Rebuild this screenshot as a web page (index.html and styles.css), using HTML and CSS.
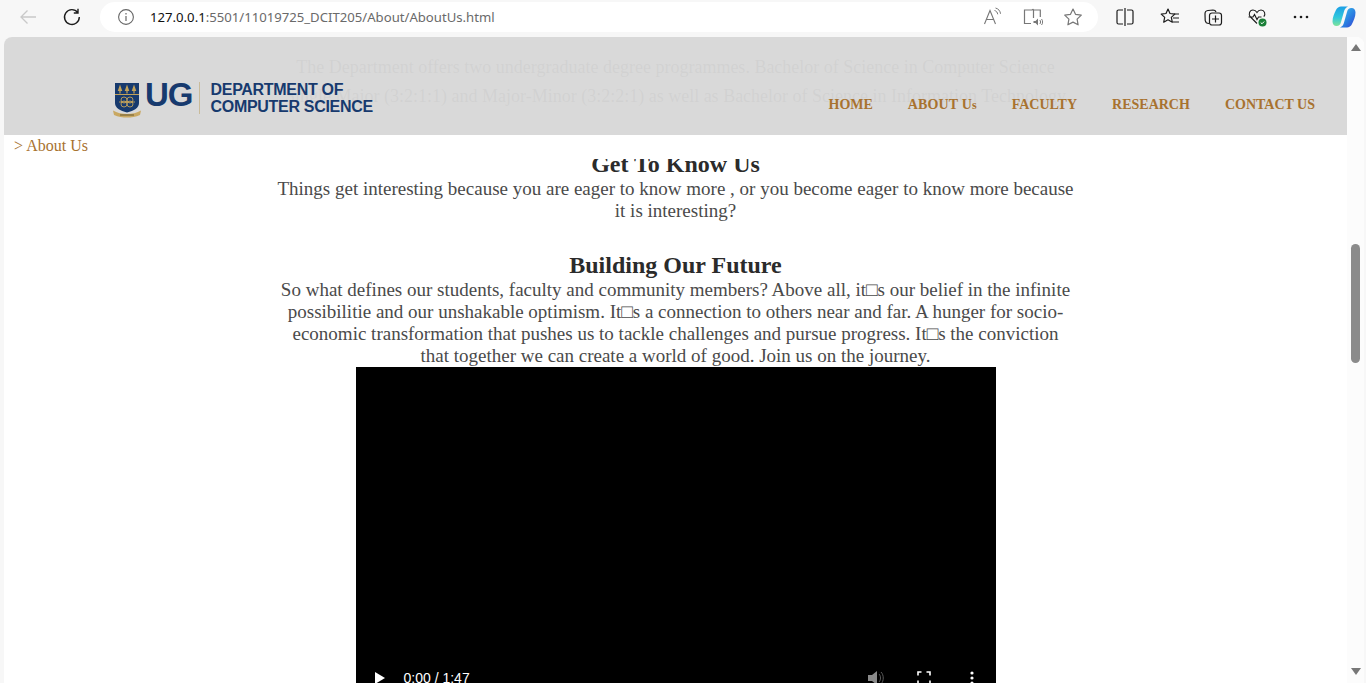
FILE: index.html
```html
<!DOCTYPE html>
<html lang="en">
<head>
<meta charset="utf-8">
<title>About Us</title>
<link rel="stylesheet" href="styles.css">
</head>
<body>
<div class="toolbar">
  <svg class="tb-icon back" width="20" height="20" viewBox="0 0 20 20"><path d="M18 10H3M9.500 3.500 3 10l6.500 6.500" fill="none" stroke="#c9c9c9" stroke-width="1.300"/></svg>
  <svg class="tb-icon reload" width="20" height="20" viewBox="0 0 20 20"><path d="M15.800 5.600A7.400 7.400 0 1 0 17.300 10M16 1.800v4.200h-4.200" fill="none" stroke="#1c1c1c" stroke-width="1.400"/></svg>
  <div class="address">
    <svg width="18" height="18" viewBox="0 0 18 18"><circle cx="9" cy="9" r="7.400" fill="none" stroke="#666" stroke-width="1.100"/><path d="M9 8v5M9 5v1.400" stroke="#666" stroke-width="1.200"/></svg>
    <span class="url"><b>127.0.0.1</b>:5501/11019725_DCIT205/About/AboutUs.html</span>
    <span class="addr-icons">
      <svg width="20" height="20" viewBox="0 0 20 20"><path d="M1.500 17 7 3.500 12.500 17M3.500 12.500h7" fill="none" stroke="#777" stroke-width="1.100"/><path d="M11.500 3.500c2 .5 3 2 3.200 3.800M12.500 1c3 .8 4.800 3 5 5.800" fill="none" stroke="#777"/></svg>
      <svg width="20" height="20" viewBox="0 0 20 20"><path d="M8 16.500H1.500V3h7.500c1-.8 1.200-.8 1.500 0h6.800v7M10.500 3v8" fill="none" stroke="#777" stroke-width="1.200"/><path d="M10.500 14h2l2.500-2.500v7L12.500 16h-2z" fill="#777"/><path d="M16.800 13c1 1 1 3 0 4M18.500 12c1.500 1.500 1.500 4.500 0 6" fill="none" stroke="#777"/></svg>
      <svg width="20" height="20" viewBox="0 0 20 20"><path d="m10 2 2.500 5.300 5.800.8-4.200 4 1 5.700-5.100-2.700-5.100 2.700 1-5.700-4.200-4 5.800-.8z" fill="none" stroke="#777" stroke-width="1.200" stroke-linejoin="round"/></svg>
    </span>
  </div>
  <div class="tools">
    <svg width="20" height="20" viewBox="0 0 20 20"><path d="M8 3H3.500A1.500 1.500 0 0 0 2 4.500v11A1.500 1.500 0 0 0 3.500 17H8M12 3h4.500A1.500 1.500 0 0 1 18 4.500v11a1.500 1.500 0 0 1-1.500 1.500H12M10 1v18" fill="none" stroke="#1c1c1c" stroke-width="1.200"/></svg>
    <svg class="fav" width="20" height="20" viewBox="0 0 20 20"><path d="m8 2 2 4.500 4.800.6-3.500 3.300 1 4.800L8 12.800l-4.300 2.400 1-4.800L1.200 7.100 6 6.500z" fill="none" stroke="#1c1c1c" stroke-width="1.200" stroke-linejoin="round"/><path d="M14 7h5M13 11h6M12.500 15h6.500" stroke="#1c1c1c" stroke-width="1.100"/></svg>
    <svg width="20" height="20" viewBox="0 0 20 20"><path d="M6 16.500c-2.200 0-3.500-1.200-3.800-3L2 7c-.1-2 1-3.300 3-3.500L10 3c1.500 0 2.600.7 3 2" fill="none" stroke="#1c1c1c" stroke-width="1.200"/><rect x="6.500" y="6" width="12" height="12" rx="2.500" fill="#f7f7f7" stroke="#1c1c1c" stroke-width="1.200"/><path d="M12.500 8.500v7M9 12h7" stroke="#1c1c1c" stroke-width="1.200"/></svg>
    <svg width="20" height="20" viewBox="0 0 20 20"><path d="M10 16.500 3.500 10C1 7.500 2.500 3 6 3c2 0 3.200 1.200 4 2.500C10.800 4.200 12 3 14 3c3.500 0 5 4 2.800 6.700M1.500 10h4.500l1.500-2.500 2.500 5 1.500-2.500h3" fill="none" stroke="#1c1c1c" stroke-width="1.100"/><circle cx="15.500" cy="15.500" r="4" fill="#1a7f37"/><path d="m13.700 15.500 1.300 1.300 2.200-2.300" fill="none" stroke="#fff"/></svg>
    <svg width="20" height="20" viewBox="0 0 20 20"><circle cx="4" cy="10" r="1.300" fill="#1c1c1c"/><circle cx="10" cy="10" r="1.300" fill="#1c1c1c"/><circle cx="16" cy="10" r="1.300" fill="#1c1c1c"/></svg>
    <svg class="copilot" width="24" height="24" viewBox="0 0 24 24"><defs><linearGradient id="cpa" x1="0" y1="0" x2="0" y2="1"><stop offset="0" stop-color="#1c9fe6"/><stop offset=".55" stop-color="#2fc7dc"/><stop offset="1" stop-color="#7fe39a"/></linearGradient><linearGradient id="cpb" x1="0" y1="0" x2="1" y2="1"><stop offset="0" stop-color="#35c9ee"/><stop offset=".6" stop-color="#2a7be0"/><stop offset="1" stop-color="#3a3fd0"/></linearGradient></defs><path d="M9 1.500h7c-2.500 1-3.500 3-4 5L9 17c-.6 2.500-2 4-4.500 4C2 21 .5 19 .5 16.500.5 12 2.500 8 4 5c1-2.200 3-3.500 5-3.500z" fill="url(#cpa)"/><path d="M15 22.500H8c2.500-1 3.500-3 4-5L15 7c.6-2.500 2-4 4.500-4 2.500 0 4 2 4 4.500 0 4.500-2 8.500-3.500 11.500-1 2.200-3 3.500-5 3.500z" fill="url(#cpb)"/></svg>
  </div>
</div>

<div class="frame">
  <header class="site-header">
    <a class="logo">
      <svg class="crest" width="28" height="35" viewBox="0 0 28 35">
        <path d="M2 0h24v20c0 5-5 7.500-12 9.500C7 27.500 2 25 2 20z" fill="#173a6e"/>
        <path d="M2 11.500h24" stroke="#c2a25a"/>
        <path d="M7 1.500 9.300 8H7.600v2.500H6.400V8H4.700zM14 1.500 16.300 8h-1.700v2.500h-1.200V8h-1.700zM21 1.500 23.300 8h-1.700v2.500h-1.200V8h-1.700z" fill="#c2a25a"/>
        <g fill="none" stroke="#c2a25a" stroke-width=".9"><circle cx="11" cy="17" r="3"/><circle cx="17" cy="17" r="3"/><circle cx="11" cy="21" r="3"/><circle cx="17" cy="21" r="3"/><path d="M6 19h16"/></g>
        <path d="M0 27.500c4 2.500 9 3.500 14 3.500s10-1 14-3.500l-1 4.500c-4 2-9 2.500-13 2.500S5 34 1 32z" fill="#c9a862"/>
        <path d="M7 32h14" stroke="#6b5a30"/>
      </svg>
      <span class="ug">UG</span>
      <span class="logo-rule"></span>
      <span class="dept">DEPARTMENT OF<br>COMPUTER SCIENCE</span>
    </a>
    <nav class="nav">
      <a>HOME</a><a class="nav-about">ABOUT U<small>s</small></a><a>FACULTY</a><a>RESEARCH</a><a>CONTACT US</a>
    </nav>
  </header>

  <main class="page">
    <p class="intro">The Department offers two undergraduate degree programmes. Bachelor of Science in Computer Science<br>Single Major (3:2:1:1) and Major-Minor (3:2:2:1) as well as Bachelor of Science in Information Technology</p>
    <div class="crumb">&gt; About Us</div>
    <section class="block first">
      <h2>Get To Know Us</h2>
      <p>Things get interesting because you are eager to know more , or you become eager to know more because it is interesting?</p>
    </section>
    <section class="block">
      <h2>Building Our Future</h2>
      <p>So what defines our students, faculty and community members? Above all, it□s our belief in the infinite possibilitie and our unshakable optimism. It□s a connection to others near and far. A hunger for socio-economic transformation that pushes us to tackle challenges and pursue progress. It□s the conviction that together we can create a world of good. Join us on the journey.</p>
    </section>
    <div class="video">
      <div class="controls">
        <svg width="12" height="14" viewBox="0 0 12 14"><path d="M1 1v12l10-6z" fill="#fff"/></svg>
        <span class="time">0:00 / 1:47</span>
        <svg class="mute" width="18" height="18" viewBox="0 0 18 18"><path d="M1 6h4l5-4v14l-5-4H1z" fill="#8a8a8a"/><path d="M12 5c2 2 2 6 0 8M14 3c3 3 3 9 0 12" fill="none" stroke="#5a5a5a"/></svg>
        <svg class="full" width="14" height="14" viewBox="0 0 14 14"><path d="M1 4.500V1h3.500M9.500 1H13v3.500M13 9.500V13H9.500M4.500 13H1V9.500" fill="none" stroke="#fff" stroke-width="1.600"/></svg>
        <svg class="more" width="4" height="14" viewBox="0 0 4 14"><circle cx="2" cy="2" r="1.600" fill="#fff"/><circle cx="2" cy="7" r="1.600" fill="#fff"/><circle cx="2" cy="12" r="1.600" fill="#fff"/></svg>
      </div>
    </div>
  </main>

  <div class="scrollbar">
    <svg width="10" height="7" viewBox="0 0 10 7"><path d="M0 7 5 0l5 7z" fill="#777"/></svg>
    <div class="thumb"></div>
    <svg class="down" width="10" height="7" viewBox="0 0 10 7"><path d="M0 0l5 7 5-7z" fill="#777"/></svg>
  </div>
</div>
</body>
</html>
```
FILE: styles.css
```css
* { box-sizing: border-box; }
html, body { height: 100%; }
body {
  margin: 0;
  height: 683px;
  overflow: hidden;
  background: #f7f7f7;
  display: flex;
  flex-direction: column;
  font-family: "Liberation Serif", serif;
}
.toolbar {
  height: 37px;
  flex: none;
  display: flex;
  align-items: center;
  padding: 0 10px 3px 18px;
}
.tb-icon { flex: none; }
.reload { margin-left: 24px; }
.address {
  margin-left: 18px;
  width: 998px;
  height: 30px;
  flex: none;
  border-radius: 15px;
  background: #fff;
  display: flex;
  align-items: center;
  padding: 0 15px 0 17px;
}
.url {
  margin-left: 15px;
  font: 13.15px "Noto Sans", sans-serif;
  color: #6a6a6a;
}
.url b { font-weight: 400; color: #111; }
.addr-icons { margin-left: auto; display: flex; gap: 20px; }
.tools {
  margin-left: 17px;
  display: flex;
  align-items: center;
  gap: 24px;
}
.fav { margin-left: 1px; margin-right: -1px; }
.copilot { margin-left: -3px; }
.frame {
  flex: 1;
  min-height: 0;
  margin: 0 2px 0 4px;
  position: relative;
  display: flex;
  background: #fff;
  border-radius: 8px 8px 0 0;
  overflow: hidden;
}
.site-header {
  position: absolute;
  left: 0;
  top: 0;
  right: 17px;
  height: 98px;
  background: rgba(215, 215, 215, .96);
  display: flex;
  align-items: flex-start;
  justify-content: space-between;
  padding: 46px 32px 0 109px;
  z-index: 2;
}
.logo {
  display: flex;
  align-items: flex-start;
}
.crest { flex: none; }
.ug {
  margin-left: 4px;
  font: 700 33px/24px "Liberation Sans", sans-serif;
  letter-spacing: -1px;
  color: #173a6e;
}
.logo-rule {
  width: 1px;
  height: 32px;
  margin: -1px 11px 0 6px;
  background: #c9bb9a;
}
.dept {
  margin-top: -2px;
  font: 700 16px/17px "Liberation Sans", sans-serif;
  letter-spacing: -.3px;
  color: #173a6e;
}
.nav {
  display: flex;
  gap: 35px;
  margin-top: 14px;
  font-size: 14px;
  font-weight: 700;
  color: #a8722f;
}
.nav small { font-size: 12px; }
.nav-about { letter-spacing: .13px; }
.page {
  flex: 1;
  min-width: 0;
  display: flex;
  flex-direction: column;
  align-items: center;
}
.intro {
  flex: none;
  margin: 16px 0 24px;
  width: 100%;
  text-align: center;
  font-size: 18px;
  line-height: 29px;
  color: #444;
}
.crumb {
  flex: none;
  align-self: stretch;
  height: 24px;
  padding-left: 10px;
  font-size: 16px;
  line-height: 21px;
  color: #a8722f;
  background: #fff;
  position: relative;
  z-index: 1;
}
.block {
  flex: none;
  width: 797px;
  text-align: center;
  margin-top: 30px;
}
.block.first { margin-top: -8px; }
.block h2 {
  margin: 0;
  font-size: 24px;
  line-height: 27px;
  color: #2b2b2b;
}
.block p {
  margin: 0;
  font-size: 19px;
  line-height: 22px;
  color: #4a4a4a;
}
.video {
  flex: none;
  width: 640px;
  height: 360px;
  background: #000;
  padding-top: 302px;
}
.controls {
  display: flex;
  align-items: center;
  height: 18px;
  padding-left: 18px;
  color: #fff;
}
.time {
  margin-left: 18px;
  font: 14px "Liberation Sans", sans-serif;
}
.mute { margin-left: auto; }
.full { margin-left: 32px; }
.more { margin-left: 39px; margin-right: 22px; }
.scrollbar {
  flex: none;
  width: 17px;
  background: #fcfcfc;
  display: flex;
  flex-direction: column;
  align-items: center;
  padding: 7px 0 8px;
}
.thumb {
  width: 9px;
  height: 119px;
  margin-top: 193px;
  border-radius: 5px;
  background: #8b8b8b;
}
.down { margin-top: auto; }
```
